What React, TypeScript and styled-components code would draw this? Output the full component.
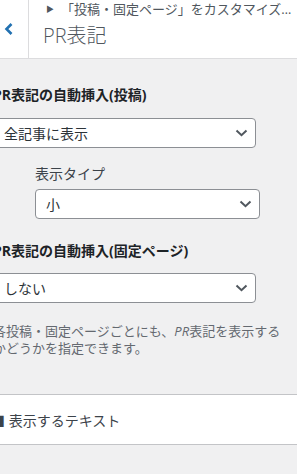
import React from "react";
import styled, { createGlobalStyle } from "styled-components";

const Global = createGlobalStyle`
  html, body { margin: 0; padding: 0; background: #f0f0f1; overflow: hidden; }
  body { font-family: "Open Sans", "Noto Sans CJK JP", sans-serif; }
`;

const Page = styled.div`
  width: 297px;
  height: 474px;
  background: #f0f0f1;
  overflow: hidden;
  position: relative;
`;

const Header = styled.div`
  display: flex;
  height: 58px;
  background: #fff;
  border-bottom: 1px solid #dcdcde;
`;

const Back = styled.div`
  width: 29px;
  flex: none;
  border-right: 1px solid #dcdcde;
  display: flex;
  align-items: center;
  justify-content: flex-start;
  padding-left: 3px;
  box-sizing: border-box;
  color: #2271b1;
`;

const Titles = styled.div`
  display: flex;
  flex-direction: column;
  padding-left: 14px;
  white-space: nowrap;
  overflow: hidden;
`;

const Crumb = styled.div`
  font-size: 13px;
  line-height: 16px;
  color: #50575e;
  margin-top: 1px;
  display: flex;
  align-items: center;
`;

const Tri = styled.span`
  font-size: 8px;
  margin: 0 7px 0 3px;
  color: #50575e;
`;

const Title = styled.div`
  font-size: 20px;
  line-height: 26px;
  color: #50575e;
  font-weight: 300;
  margin-top: 6px;
`;

const Body = styled.div`
  margin-left: -7px;
  width: 320px;
  padding-top: 26px;
`;

const Control = styled.div<{ $indent?: number; $gap?: number }>`
  display: flex;
  flex-direction: column;
  padding-left: ${(p) => p.$indent ?? 0}px;
  margin-top: ${(p) => p.$gap ?? 0}px;
`;

const Label = styled.div<{ $bold?: boolean; $space: number }>`
  font-size: 14px;
  line-height: 20px;
  font-weight: ${(p) => (p.$bold ? 700 : 400)};
  color: ${(p) => (p.$bold ? "#1d2327" : "#3c434a")};
  margin-bottom: ${(p) => p.$space}px;
  white-space: nowrap;
`;

const Select = styled.div<{ $width: number }>`
  width: ${(p) => p.$width}px;
  height: 30px;
  box-sizing: border-box;
  background: #fff;
  border: 1px solid #8c8f94;
  border-radius: 4px;
  display: flex;
  align-items: center;
  justify-content: space-between;
  padding: 0 7px 0 10px;
  font-size: 14px;
  color: #2c3338;
`;

const Desc = styled.div`
  font-size: 13px;
  line-height: 17px;
  color: #646970;
  margin-top: 20px;
  width: 300px;
  em { font-style: italic; }
`;

const Section = styled.div`
  margin-top: 37px;
  margin-left: -9px;
  width: 330px;
  height: 51px;
  box-sizing: border-box;
  background: #fff;
  border-top: 1px solid #c3c4c7;
  border-bottom: 1px solid #c3c4c7;
  display: flex;
  align-items: center;
  font-size: 14px;
  color: #3c434a;
  padding-left: 7px;
`;

const Chevron = () => (
  <svg width="13" height="8" viewBox="0 0 13 8">
    <path d="M1.5 1.5 L6.5 6.2 L11.5 1.5" fill="none" stroke="#50575e" strokeWidth="2" />
  </svg>
);

const BackIcon = () => (
  <svg width="12" height="16" viewBox="0 0 12 16">
    <path d="M8.5 3 L3.5 8 L8.5 13" fill="none" stroke="#2271b1" strokeWidth="2.6" />
  </svg>
);

export default function App() {
  return (
    <Page>
      <Global />
      <Header>
        <Back>
          <BackIcon />
        </Back>
        <Titles>
          <Crumb>
            <Tri>▶</Tri>「投稿・固定ページ」をカスタマイズ…
          </Crumb>
          <Title>PR表記</Title>
        </Titles>
      </Header>
      <Body>
        <Control>
          <Label $bold $space={13}>PR表記の自動挿入(投稿)</Label>
          <Select $width={263}>
            <span>全記事に表示</span>
            <Chevron />
          </Select>
        </Control>
        <Control $indent={42} $gap={16}>
          <Label $space={5}>表示タイプ</Label>
          <Select $width={225}>
            <span>小</span>
            <Chevron />
          </Select>
        </Control>
        <Control $gap={22}>
          <Label $bold $space={12}>PR表記の自動挿入(固定ページ)</Label>
          <Select $width={263}>
            <span>しない</span>
            <Chevron />
          </Select>
          <Desc>
            各投稿・固定ページごとにも、<em>PR</em>表記を表示するかどうかを指定できます。
          </Desc>
        </Control>
        <Section>■ 表示するテキスト</Section>
      </Body>
    </Page>
  );
}
